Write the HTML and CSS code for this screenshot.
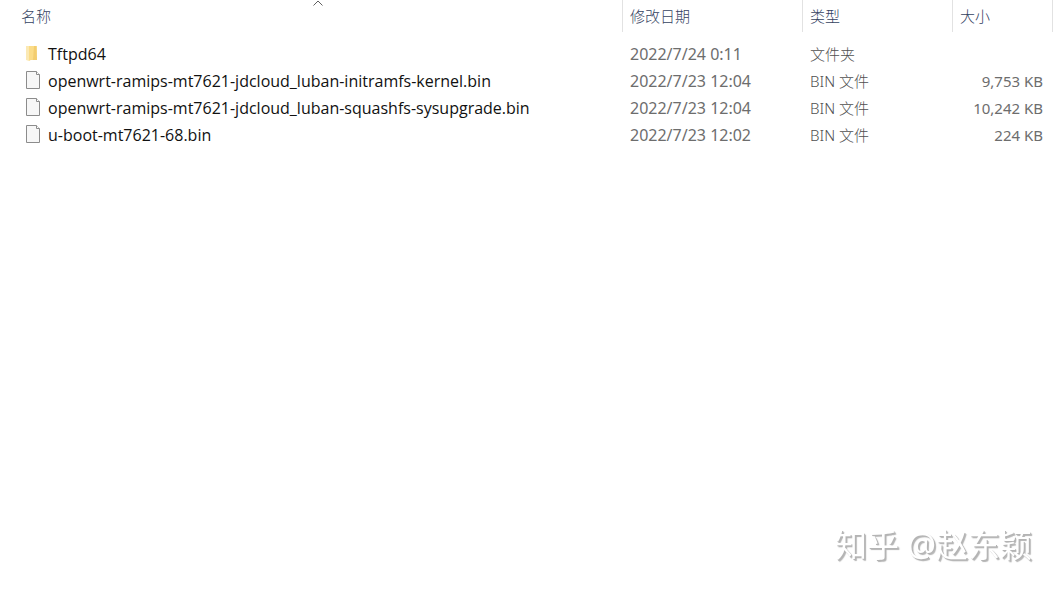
FILE: index.html
```html
<!DOCTYPE html>
<html lang="zh-CN">
<head>
<meta charset="utf-8">
<meta name="viewport" content="width=device-width, initial-scale=1">
<title>Tftpd64</title>
<link rel="stylesheet" href="styles.css">
</head>
<body>
<svg class="sprite" aria-hidden="true">
  <symbol id="icon-folder" viewBox="0 0 16 18">
    <path d="M1 2h11v14H1z" fill="#f7d98a"/>
    <path d="M1 2h3v15l-3-1z" fill="#fbe9b4"/>
    <path d="M4 2h5v12l-5 3z" fill="#fbdc88"/>
    <path d="M9 2h2l1 14H8z" fill="#f3cd70"/>
  </symbol>
  <symbol id="icon-file" viewBox="0 0 16 18">
    <path d="M1.500.5h10l3 3v14h-13z" fill="#f7f7f7" stroke="#8c8c8c"/>
    <path d="M11.500.5v3h3" fill="#fff" stroke="#8c8c8c"/>
  </symbol>
</svg>
<main class="file-list">
  <table class="files">
    <colgroup>
      <col>
      <col class="col-date">
      <col class="col-type">
      <col class="col-size">
    </colgroup>
    <thead>
      <tr>
        <th class="sorted" aria-sort="ascending"><button class="sort" type="button">名称</button><svg class="sort-mark" viewBox="0 0 10 6" aria-hidden="true"><path d="M.5 5.500l4.500-4.500 4.500 4.500" fill="none" stroke="#606060"/></svg></th>
        <th><button class="sort" type="button">修改日期</button></th>
        <th><button class="sort" type="button">类型</button></th>
        <th><button class="sort" type="button">大小</button></th>
      </tr>
    </thead>
    <tbody>
      <tr>
        <td><div class="name"><svg class="icon" aria-hidden="true"><use href="#icon-folder"/></svg>Tftpd64</div></td>
        <td class="date">2022/7/24 0:11</td><td class="type">文件夹</td><td class="size"></td>
      </tr>
      <tr>
        <td><div class="name"><svg class="icon" aria-hidden="true"><use href="#icon-file"/></svg>openwrt-ramips-mt7621-jdcloud_luban-initramfs-kernel.bin</div></td>
        <td class="date">2022/7/23 12:04</td><td class="type">BIN 文件</td><td class="size">9,753 KB</td>
      </tr>
      <tr>
        <td><div class="name"><svg class="icon" aria-hidden="true"><use href="#icon-file"/></svg>openwrt-ramips-mt7621-jdcloud_luban-squashfs-sysupgrade.bin</div></td>
        <td class="date">2022/7/23 12:04</td><td class="type">BIN 文件</td><td class="size">10,242 KB</td>
      </tr>
      <tr>
        <td><div class="name"><svg class="icon" aria-hidden="true"><use href="#icon-file"/></svg>u-boot-mt7621-68.bin</div></td>
        <td class="date">2022/7/23 12:02</td><td class="type">BIN 文件</td><td class="size">224 KB</td>
      </tr>
    </tbody>
  </table>
</main>
<div class="watermark">知乎 @赵东颖</div>
</body>
</html>
```
FILE: styles.css
```css
* {
  box-sizing: border-box;
}

body {
  margin: 0;
  min-height: 100vh;
  background: #fff;
  color: #6d6d6d;
  font: 15px/27px "Noto Sans", "Noto Sans CJK SC", sans-serif;
}

.sprite {
  position: absolute;
  width: 0;
  height: 0;
}

.file-list {
  padding-right: 6px;
}

.files {
  width: 100%;
  table-layout: fixed;
  border-collapse: separate;
  border-spacing: 0;
}

.col-date {
  width: 180px;
}

.col-type {
  width: 150px;
}

.col-size {
  width: 100px;
}

th {
  position: relative;
  height: 32px;
  padding: 0;
  border-right: 1px solid #e2e2e2;
  text-align: left;
}

.sort {
  display: block;
  width: 100%;
  height: 32px;
  padding: 0 7px;
  border: 0;
  background: none;
  color: #34425f;
  font: inherit;
  font-weight: 300;
  line-height: 32px;
  text-align: left;
}

.sorted .sort {
  padding-left: 21px;
}

.sort-mark {
  position: absolute;
  top: 0;
  left: calc(50% + 2px);
  width: 10px;
  height: 6px;
}

tbody::before {
  content: "";
  display: block;
  height: 9px;
}

td {
  height: 27px;
  padding: 0 7px;
  white-space: nowrap;
}

.name {
  display: flex;
  align-items: center;
  gap: 7px;
  padding-left: 18px;
  color: #111;
  font-family: "Open Sans", "Noto Sans CJK SC", sans-serif;
  font-size: 16px;
}

.icon {
  width: 16px;
  height: 18px;
  margin-bottom: 4px;
}

.date {
  font-size: 16px;
}

.type {
  color: #505050;
  font-weight: 300;
}

.size {
  padding-right: 10px;
  text-align: right;
}

.watermark {
  position: fixed;
  right: 27px;
  bottom: 26px;
  color: #fff;
  font-size: 32px;
  line-height: 40px;
  text-shadow: 1px 1px 0 #b4b4b4, 2px 2px 1px #b4b4b4;
}
```
